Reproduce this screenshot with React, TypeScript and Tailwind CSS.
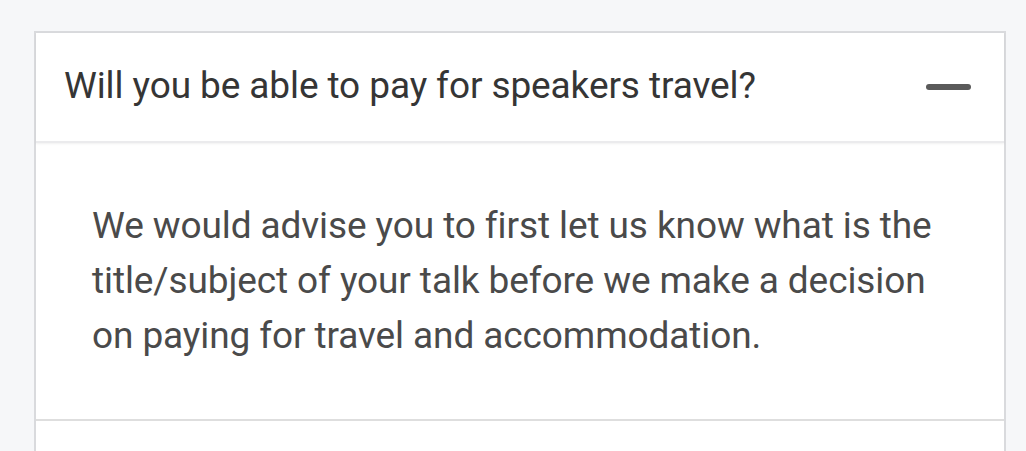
export default function App() {
    return (
        <div className="w-screen h-[451px] overflow-hidden bg-[#f6f7f9] pt-[31px] px-[34px]" style={{ fontFamily: "Roboto, sans-serif" }}>
            <div className="w-[972px] border-x-2 border-t-2 border-[#d9dadd] bg-white">
                <div className="h-[110px] flex items-center justify-between pl-[28px] pr-[33px] border-b-2 border-[#ebebed] shadow-[0_1px_2px_rgba(0,0,0,0.06)]">
                    <div className="text-[37px] text-[#353535] pb-[2px] tracking-[-0.1px]">Will you be able to pay for speakers travel?</div>
                    <div className="w-[45px] h-[6px] rounded-full bg-[#5a5a5a]" />
                </div>
                <div className="pl-[56px] pr-[60px] pt-[55px] pb-[56px] border-b-2 border-[#dedede]">
                    <p className="text-[37px] leading-[55px] text-[#4a4a4a] tracking-[-0.1px]">
                        We would advise you to first let us know what is the title/subject of your talk before we make a decision on paying for travel and accommodation.
                    </p>
                </div>
                <div className="h-[40px]" />
            </div>
        </div>
    )
}
